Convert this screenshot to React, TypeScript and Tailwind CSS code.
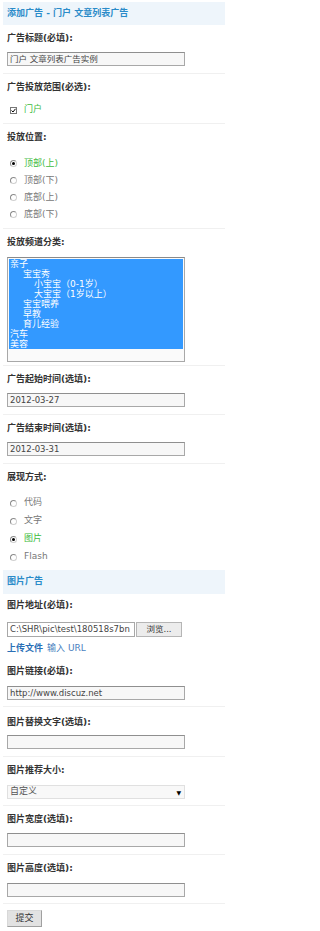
import React from "react";

const FONT = "font-['DejaVu_Sans','Noto_Sans_CJK_SC',sans-serif]";

function Label({ children, cls }: { children: React.ReactNode; cls: string }) {
  return <div className={cls + " leading-[12px] text-[9px] font-bold text-[#333]"}>{children}</div>;
}

function Input({ value, cls }: { value?: string; cls: string }) {
  return (
    <div
      className={
        cls +
        " h-[14px] w-[178px] border border-[#a8a8a8] border-t-[#8f8f8f] bg-[#f7f7f7] flex items-center px-[2px] text-[8.5px] text-[#444] overflow-hidden whitespace-nowrap"
      }
    >
      {value}
    </div>
  );
}

function Radio({ checked, label, h }: { checked?: boolean; label: string; h: string }) {
  return (
    <div className={h + " flex items-center pl-[3px]"}>
      <span className="w-[7px] h-[7px] rounded-full border border-[#8a8a8a] border-r-[#d0d0d0] border-b-[#d0d0d0] bg-white flex items-center justify-center">
        {checked && <span className="w-[3px] h-[3px] rounded-full bg-black" />}
      </span>
      <span className={checked ? "ml-[7px] text-[9px] text-[#3dbb3d]" : "ml-[7px] text-[9px] text-[#777]"}>{label}</span>
    </div>
  );
}

const Section = ({ children, cls }: { children: React.ReactNode; cls: string }) => (
  <div className={cls + " ml-[3px] pl-[4px] border-b border-[#f0f0f0]"}>{children}</div>
);

export default function App() {
  const items: [string, string][] = [
    ["亲子", "pl-[0px]"],
    ["宝宝秀", "pl-[13px]"],
    ["小宝宝（0-1岁）", "pl-[24px]"],
    ["大宝宝（1岁以上）", "pl-[24px]"],
    ["宝宝喂养", "pl-[13px]"],
    ["早教", "pl-[13px]"],
    ["育儿经验", "pl-[13px]"],
    ["汽车", "pl-[0px]"],
    ["美容", "pl-[0px]"],
  ];
  return (
    <div className={FONT + " w-[225px] h-[931px] bg-white text-[9px] overflow-hidden"}>
      <div className="mt-[2px] ml-[3px] h-[23px] bg-[#eef5fb] flex items-center pl-[4px] text-[9px] font-semibold text-[#2a8bc9]">
        添加广告 - 门户 文章列表广告
      </div>

      <Section cls="pb-[7px]">
        <Label cls="pt-[7px]">广告标题(必填):</Label>
        <Input cls="mt-[8px]" value="门户 文章列表广告实例" />
      </Section>

      <Section cls="pb-[3px]">
        <Label cls="pt-[7px]">广告投放范围(必选):</Label>
        <div className="mt-[7px] h-[20px] flex items-center pl-[3px]">
          <span className="w-[7px] h-[7px] border border-[#777] bg-white flex items-center justify-center">
            <svg width="5" height="5" viewBox="0 0 5 5">
              <path d="M0.5 2.5 L2 4 L4.5 0.8" stroke="#000" strokeWidth="1" fill="none" />
            </svg>
          </span>
          <span className="ml-[7px] text-[#3dbb3d]">门户</span>
        </div>
      </Section>

      <Section cls="pb-[5px]">
        <Label cls="pt-[7px]">投放位置:</Label>
        <div className="mt-[12px]">
          <Radio h="h-[17px]" checked label="顶部(上)" />
          <Radio h="h-[17px]" label="顶部(下)" />
          <Radio h="h-[17px]" label="底部(上)" />
          <Radio h="h-[17px]" label="底部(下)" />
        </div>
      </Section>

      <Section cls="pb-[3px]">
        <Label cls="pt-[7px]">投放频道分类:</Label>
        <div className="mt-[9px] h-[105px] w-[178px] border border-[#a8a8a8] border-t-[#8a8a8a] bg-[#fafafa] p-[1px]">
          <div className="bg-[#3399ff] text-white leading-[10px] text-[9px] pl-[1px]">
            {items.map(([t, p]) => (
              <div key={t} className={p + " h-[10px] whitespace-nowrap"}>
                {t}
              </div>
            ))}
          </div>
        </div>
      </Section>

      <Section cls="pb-[7px]">
        <Label cls="pt-[7px]">广告起始时间(选填):</Label>
        <Input cls="mt-[8px]" value="2012-03-27" />
      </Section>

      <Section cls="pb-[7px]">
        <Label cls="pt-[7px]">广告结束时间(选填):</Label>
        <Input cls="mt-[8px]" value="2012-03-31" />
      </Section>

      <div className="ml-[3px] pl-[4px] pb-[4px]">
        <Label cls="pt-[7px]">展现方式:</Label>
        <div className="mt-[11px]">
          <Radio h="h-[18px]" label="代码" />
          <Radio h="h-[18px]" label="文字" />
          <Radio h="h-[18px]" checked label="图片" />
          <Radio h="h-[18px]" label="Flash" />
        </div>
      </div>

      <div className="ml-[3px] h-[24px] bg-[#eef5fb] flex items-center pl-[4px] text-[9px] font-semibold text-[#2a8bc9]">
        图片广告
      </div>

      <div className="ml-[3px] pl-[4px]">
        <Label cls="pt-[5px]">图片地址(必填):</Label>
        <div className="mt-[11px] h-[15px] flex items-center">
          <div className="h-[15px] w-[128px] border border-[#a8a8a8] bg-white flex items-center px-[2px] text-[8.5px] text-[#444] overflow-hidden whitespace-nowrap">
            C:\SHR\pic\test\180518s7bn
          </div>
          <div className="ml-[1px] h-[15px] w-[46px] border border-[#b5b5b5] bg-[#ececec] flex items-center justify-center text-[8.5px] text-[#333]">
            浏览...
          </div>
        </div>
        <div className="mt-[4px] h-[16px] flex items-center text-[9px]">
          <span className="font-semibold text-[#2a6fb6]">上传文件</span>
          <span className="ml-[4px] text-[#4a7fc0]">输入 URL</span>
        </div>
      </div>

      <Section cls="pb-[6px]">
        <Label cls="pt-[8px]">图片链接(必填):</Label>
        <Input cls="mt-[9px]" value="http://www.discuz.net" />
      </Section>

      <Section cls="pb-[7px]">
        <Label cls="pt-[9px]">图片替换文字(选填):</Label>
        <Input cls="mt-[7px]" />
      </Section>

      <Section cls="pb-[6px]">
        <Label cls="pt-[7px]">图片推荐大小:</Label>
        <div className="mt-[9px] h-[14px] w-[178px] border border-[#e0e0e0] bg-[#f8f8f8] flex items-center justify-between px-[2px] text-[9px] text-[#555]">
          <span>自定义</span>
          <span className="text-[6px] text-black mr-[1px]">▼</span>
        </div>
      </Section>

      <Section cls="pb-[7px]">
        <Label cls="pt-[7px]">图片宽度(选填):</Label>
        <Input cls="mt-[8px]" />
      </Section>

      <Section cls="pb-[6px]">
        <Label cls="pt-[7px]">图片高度(选填):</Label>
        <Input cls="mt-[9px]" />
      </Section>

      <div className="ml-[3px] pl-[4px] pt-[6px]">
        <div className="h-[17px] w-[35px] border border-[#a0a0a0] border-t-[#d8d8d8] border-l-[#d8d8d8] bg-[#e2e2e2] flex items-center justify-center text-[9px] text-[#333]">
          提交
        </div>
      </div>
    </div>
  );
}
